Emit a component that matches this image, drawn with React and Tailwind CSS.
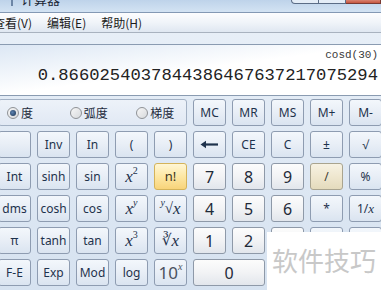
import React from "react"

const base =
  "flex items-center justify-center border rounded-[3px] leading-none select-none"
const fnKey =
  "border-[#8e9cb1] bg-gradient-to-b from-[#f3f7fc] via-[#e8eef6] to-[#dae4f0] text-[#1e324c]"
const numKey =
  "border-[#8e99a8] bg-gradient-to-b from-[#fcfcfc] via-[#f2f3f5] to-[#e2e6ec] text-[#1f2a38]"
const hotKey =
  "border-[#d4b35a] bg-gradient-to-b from-[#fff6d4] via-[#fde7a3] to-[#f8d47a] text-[#3b3420]"
const warmKey =
  "border-[#a9a48f] bg-gradient-to-b from-[#f7f2e3] via-[#efe7cf] to-[#e4dbbd] text-[#3b3a30]"

const sans = { fontFamily: '"Noto Sans", "Open Sans", sans-serif' }
const serif = { fontFamily: '"Liberation Serif", "DejaVu Serif", serif' }
const mono = { fontFamily: '"Liberation Mono", "DejaVu Sans Mono", monospace' }
const cjk = { fontFamily: '"Noto Sans CJK SC", "Noto Sans", sans-serif' }

const Key = ({ children, kind = "fn", className = "", font = sans }) => {
  const skin =
    kind === "num" ? numKey : kind === "hot" ? hotKey : kind === "warm" ? warmKey : fnKey
  return (
    <div className={`${base} ${skin} ${className}`} style={font}>
      {children}
    </div>
  )
}

const X = () => <i className="text-[17px]">x</i>
const Sup = ({ children }) => (
  <span className="text-[10px] -translate-y-[6px] inline-block not-italic">{children}</span>
)

const Radio = ({ on, label, w }) => (
  <div className={`flex items-center gap-[2px] ${w}`}>
    <span className="flex items-center justify-center w-[12px] h-[12px] rounded-full border border-[#8f9296] bg-gradient-to-br from-[#f7f7f7] to-[#d7d9dc]">
      {on && (
        <span className="w-[6px] h-[6px] rounded-full bg-[radial-gradient(circle_at_40%_40%,#5d82b0,#17304f)]" />
      )}
    </span>
    <span className="text-[12px] text-[#1e2b3c] leading-none" style={cjk}>
      {label}
    </span>
  </div>
)

const Backspace = () => (
  <svg width="19" height="9" viewBox="0 0 19 9">
    <path d="M18 4.5H4" stroke="#1e324c" strokeWidth="2.2" />
    <path d="M0.5 4.5L6 0.8V8.2Z" fill="#1e324c" />
  </svg>
)

export default function App() {
  return (
    <div className="w-[381px] h-[290px] overflow-hidden relative bg-gradient-to-b from-[#e9f0f8] to-[#d6e2f0]">
      {/* title bar, cut at the top */}
      <div className="h-[12px] flex items-start bg-gradient-to-b from-[#bed3ea] to-[#d3e3f3] overflow-hidden">
        <div className="w-[2px] h-[6px] bg-[#6d86a6] ml-[11px]" />
        <span className="ml-[8px] -mt-[9px] text-[13px] text-[#1b2636] leading-[15px]" style={cjk}>
          计算器
        </span>
        <div className="ml-auto flex items-start">
          <div className="w-[28px] h-[4px] border border-t-0 border-[#5b6d86] rounded-bl-[4px] bg-[#e4edf7]" />
          <div className="w-[27px] h-[4px] border border-t-0 border-l-0 border-[#5b6d86] bg-[#e4edf7]" />
          <div className="w-[35px] h-[4px] border border-t-0 border-l-0 border-[#7a3a32] bg-gradient-to-b from-[#d7826f] to-[#c6553f]" />
        </div>
      </div>

      {/* menu bar */}
      <div
        className="h-[21px] flex items-center border-t border-[#8499b4] border-b border-b-[#a8b2bf] bg-gradient-to-b from-[#fdfdfe] via-[#f0f4f9] to-[#dfe7f1] text-[12px] text-[#1b1b1b]"
        style={cjk}
      >
        <span className="-ml-[7px]">查看(V)</span>
        <span className="ml-[15px]">编辑(E)</span>
        <span className="ml-[15px]">帮助(H)</span>
      </div>

      <div className="-ml-[2px] w-[385px] pt-[11px]">
        {/* display */}
        <div className="h-[52px] border border-[#8a9bb1] rounded-[2px] bg-gradient-to-br from-[#dce7f4] via-white to-white flex flex-col items-end pr-[4px] pt-[3px]">
          <div className="h-[14px] flex items-center text-[11px] text-[#3a3a3a]" style={mono}>
            cosd(30)
          </div>
          <div className="mt-[3px] h-[22px] flex items-center text-[17.2px] text-[#222]" style={mono}>
            0.8660254037844386467637217075294
          </div>
        </div>

        {/* keys */}
        <div className="mt-[3px] grid grid-cols-[repeat(10,33px)] grid-rows-[repeat(6,27px)] gap-x-[6px] gap-y-[5px] text-[12px]">
          <div className="col-span-5 flex items-center pl-[8px] border border-[#a3b1c4] rounded-[3px] bg-gradient-to-b from-[#edf2f9] to-[#e1e9f4]">
            <Radio on label="度" w="w-[63px]" />
            <Radio label="弧度" w="w-[67px]" />
            <Radio label="梯度" w="w-[50px]" />
          </div>
          <Key>MC</Key>
          <Key>MR</Key>
          <Key>MS</Key>
          <Key>M+</Key>
          <Key>M-</Key>

          <Key />
          <Key>Inv</Key>
          <Key>In</Key>
          <Key>(</Key>
          <Key>)</Key>
          <Key><Backspace /></Key>
          <Key>CE</Key>
          <Key>C</Key>
          <Key>±</Key>
          <Key>√</Key>

          <Key>Int</Key>
          <Key>sinh</Key>
          <Key>sin</Key>
          <Key font={serif}><X /><Sup>2</Sup></Key>
          <Key kind="hot" className="text-[13px]">n!</Key>
          <Key kind="num" className="text-[16px]">7</Key>
          <Key kind="num" className="text-[16px]">8</Key>
          <Key kind="num" className="text-[16px]">9</Key>
          <Key kind="warm">/</Key>
          <Key>%</Key>

          <Key>dms</Key>
          <Key>cosh</Key>
          <Key>cos</Key>
          <Key font={serif}><X /><Sup><i>y</i></Sup></Key>
          <Key font={serif}>
            <span className="text-[15px] flex items-center">
              <Sup><i>y</i></Sup>
              <span>√</span>
            </span>
            <X />
          </Key>
          <Key kind="num" className="text-[16px]">4</Key>
          <Key kind="num" className="text-[16px]">5</Key>
          <Key kind="num" className="text-[16px]">6</Key>
          <Key>*</Key>
          <Key>1/<i style={serif} className="text-[13px]">x</i></Key>

          <Key>π</Key>
          <Key>tanh</Key>
          <Key>tan</Key>
          <Key font={serif}><X /><Sup>3</Sup></Key>
          <Key font={serif}><span className="text-[15px]">∛</span><X /></Key>
          <Key kind="num" className="text-[16px]">1</Key>
          <Key kind="num" className="text-[16px]">2</Key>
          {/* keys below are hidden under the watermark */}
          <Key kind="num" />
          <Key />
          <Key className="row-span-2" />

          <Key>F-E</Key>
          <Key>Exp</Key>
          <Key>Mod</Key>
          <Key>log</Key>
          <Key className="text-[17px] text-[#4a5260]">10<Sup><i style={serif}>x</i></Sup></Key>
          <Key kind="num" className="col-span-2 text-[16px]">0</Key>
          <Key kind="num" />
          <Key />
        </div>
      </div>

      {/* watermark overlay */}
      <div className="absolute left-[267px] top-[232px] w-[114px] h-[58px] bg-white flex items-center pl-[5px]">
        <span className="text-[26px] text-[#c8c8c8] leading-none -mt-[2px]" style={cjk}>
          软件技巧
        </span>
      </div>
    </div>
  )
}
